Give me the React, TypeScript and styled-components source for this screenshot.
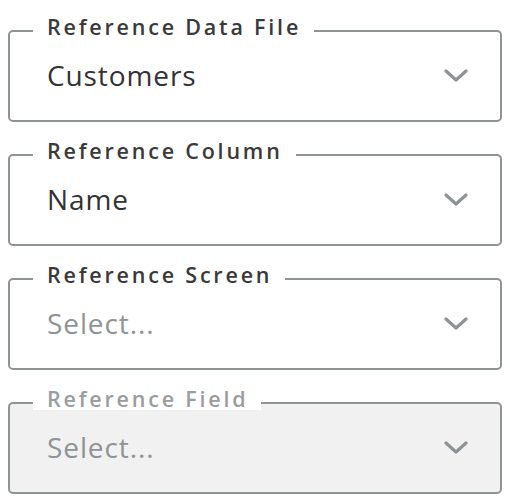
import React from 'react';
import styled, { createGlobalStyle } from 'styled-components';

type FieldProps = {
    label: string;
    value?: string;
    disabled?: boolean;
};

const Chevron: React.FC = () => (
    <svg width="24" height="13" viewBox="0 0 24 13" fill="none">
        <path d="M2 2L12 11L22 2" stroke="#8e9396" strokeWidth="3.2" strokeLinecap="round" strokeLinejoin="round" />
    </svg>
);

const Field: React.FC<FieldProps> = ({ label, value, disabled }) => {
    return (
        <FieldWrap>
            <FieldBox disabled={!!disabled}>
                <FieldValue placeholder={!value}>{value || 'Select...'}</FieldValue>
                <Chevron />
            </FieldBox>
            <FieldLabel disabled={!!disabled}>{label}</FieldLabel>
        </FieldWrap>
    );
};

const App: React.FC = () => {
    return (
        <Page>
            <GlobalStyle />
            <Field label="Reference Data File" value="Customers" />
            <Field label="Reference Column" value="Name" />
            <Field label="Reference Screen" />
            <Field label="Reference Field" disabled />
        </Page>
    );
};

const GlobalStyle = createGlobalStyle`
    body{
        margin:0;
        background:#ffffff;
        font-family:'Open Sans','Liberation Sans',sans-serif;
    }
`;

const Page = styled.div`
    width:494px;
    padding:30px 8px 0 8px;
    display:flex;
    flex-direction:column;
    gap:32px;
`;

const FieldWrap = styled.div`
    position:relative;
`;

const FieldBox = styled.div<{ disabled: boolean }>`
    height:92px;
    box-sizing:border-box;
    border:2px solid #8e9396;
    border-radius:5px;
    background:${p => (p.disabled ? '#f1f1f1' : '#ffffff')};
    display:flex;
    align-items:center;
    justify-content:space-between;
    padding:0 32px 2px 37px;
`;

const FieldValue = styled.span<{ placeholder: boolean }>`
    font-size:28px;
    letter-spacing:0.9px;
    color:${p => (p.placeholder ? '#8e9396' : '#333333')};
`;

const FieldLabel = styled.div<{ disabled: boolean }>`
    position:absolute;
    top:-14px;
    left:25px;
    padding:0 13px 1px 14px;
    background:#ffffff;
    font-size:21.5px;
    line-height:21px;
    font-weight:600;
    letter-spacing:2.8px;
    color:${p => (p.disabled ? '#999da0' : '#3a3a3a')};
`;

export default App;
